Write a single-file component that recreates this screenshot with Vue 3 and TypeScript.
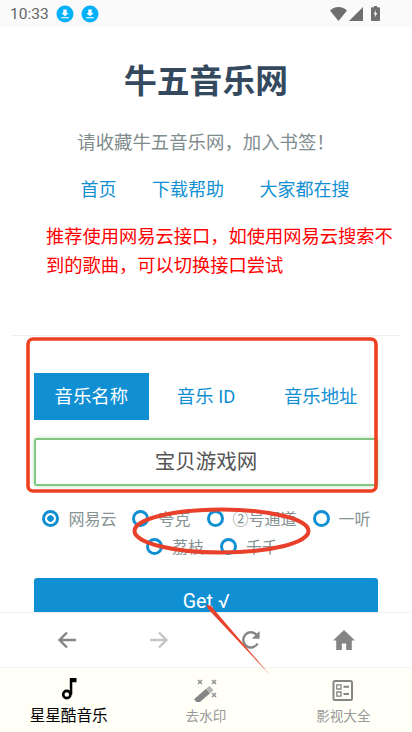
<template>
  <div class="phone">
    <header class="status-bar">
      <span class="clock">10:33</span>
      <svg v-for="n in 2" :key="n" class="dl-icon" viewBox="0 0 18 18">
        <circle cx="9" cy="9" r="8.5" fill="#03b1fb" />
        <path d="M7.3 4.6h3.4v3.3h2L9 11.3 5.3 7.9h2z" fill="#fff" />
        <rect x="5.2" y="12.2" width="7.6" height="1.1" fill="#fff" />
      </svg>
      <span class="status-right">
        <svg width="17" height="14" viewBox="0 0 17 14"><path d="M0 3.5C2.2 1.300 5.2 0 8.500 0s6.300 1.300 8.500 3.500L8.500 14z" fill="#6f6f6f" /></svg>
        <svg width="14" height="14" viewBox="0 0 14 14"><path d="M14 0v14H0z" fill="#6f6f6f" /></svg>
        <svg class="battery" width="9" height="15" viewBox="0 0 9 15">
          <path d="M3 0h3v1.2h2.2a.8.8 0 0 1 .8.8v12.2a.8.8 0 0 1-.8.8H.8a.8.8 0 0 1-.8-.8V2a.8.8 0 0 1 .8-.8H3z" fill="#6f6f6f" />
          <path d="M5 4 2.7 8.2h1.5L3.800 11.600 6.300 7H4.700z" fill="#fafafa" />
        </svg>
      </span>
    </header>

    <main class="page">
      <h1 class="title">牛五音乐网</h1>
      <p class="subtitle">请收藏牛五音乐网，加入书签！</p>
      <nav class="links">
        <a v-for="link in links" :key="link">{{ link }}</a>
      </nav>
      <p class="notice">推荐使用网易云接口，如使用网易云搜索不到的歌曲，可以切换接口尝试</p>
      <hr class="divider" />

      <div class="form">
        <ul class="tabs">
          <li v-for="(tab, i) in tabs" :key="tab" :class="{ active: i === 0 }">{{ tab }}</li>
        </ul>
        <div class="search-input">宝贝游戏网</div>
        <div class="sources">
          <div v-for="(row, r) in sourceRows" :key="r" class="source-row">
            <label v-for="source in row" :key="source" class="source">
              <span class="radio" :class="{ checked: source === '网易云' }"></span>{{ source }}
            </label>
          </div>
        </div>
        <button class="get-btn" type="button">Get √</button>
      </div>
    </main>

    <div class="browser-bar">
      <svg width="22" height="22" viewBox="0 0 22 22"><path d="M20 11H4M11 3.500 3.500 11l7.500 7.500" fill="none" stroke="#858585" stroke-width="2.400" /></svg>
      <svg width="22" height="22" viewBox="0 0 22 22"><path d="M2 11h16M11 3.500l7.500 7.500-7.500 7.500" fill="none" stroke="#c4c4c4" stroke-width="2.400" /></svg>
      <svg width="22" height="22" viewBox="0 0 22 22"><path d="M17.600 14.500A7.600 7.600 0 1 1 16.400 5.600" fill="none" stroke="#858585" stroke-width="2.400" /><path d="M19.600 2v7.800h-7.800z" fill="#858585" /></svg>
      <svg width="24" height="22" viewBox="0 0 24 22"><path d="M12 1 1 11.500h3.200V21h5.600v-6.500h4.400V21h5.600v-9.500H23z" fill="#858585" /></svg>
    </div>

    <footer class="tab-bar">
      <div class="tab-item on">
        <svg width="24" height="24" viewBox="0 0 24 24">
          <circle cx="9.800" cy="16.500" r="3.600" fill="none" stroke="#000" stroke-width="2.600" />
          <path d="M12.800 16.500V0h6.700v4.200h-4.200v12.300z" fill="#000" />
        </svg>
        <span>星星酷音乐</span>
      </div>
      <div class="tab-item">
        <svg width="24" height="24" viewBox="0 0 24 24">
          <path d="M2 23.500 14 13" stroke="#858585" stroke-width="6" fill="none" />
          <path d="M14 13l3.500-3" stroke="#b5b5b5" stroke-width="6" fill="none" />
          <path d="M4 2l4 4M8 2 4 6M18 2l4 4M22 2l-4 4M18 15l4 4M22 15l-4 4" stroke="#949494" stroke-width="1.600" fill="none" />
        </svg>
        <span>去水印</span>
      </div>
      <div class="tab-item">
        <svg width="24" height="24" viewBox="0 0 24 24">
          <rect x="2.500" y="3" width="18.500" height="19" rx="1.500" fill="none" stroke="#858585" stroke-width="2" />
          <path d="M5.800 6.800h4.200V11H5.800zM5.800 14h4.200v4.200H5.800z" fill="none" stroke="#858585" stroke-width="1.300" />
          <path d="M12.500 8.800H18M12.500 16H18" stroke="#858585" stroke-width="2" />
        </svg>
        <span>影视大全</span>
      </div>
    </footer>

    <!-- hand-drawn annotations over the screenshot -->
    <svg class="marks" width="412" height="732" viewBox="0 0 412 732">
      <rect x="28" y="339" width="348" height="152" rx="5" fill="none" stroke="#ee4122" stroke-width="3.600" />
      <ellipse cx="221.500" cy="531" rx="87" ry="21.500" fill="none" stroke="#e8402a" stroke-width="4" />
      <path d="M206.500 604.500 211 606 270 675 208 609z" fill="#e8402a" />
    </svg>
  </div>
</template>

<script setup lang="ts">
const links = ['首页', '下载帮助', '大家都在搜']
const tabs = ['音乐名称', '音乐 ID', '音乐地址']
const sourceRows = [
  ['网易云', '夸克', '②号通道', '一听'],
  ['荔枝', '千千']
]
</script>

<style>
html,
body {
  margin: 0;
  background: #fff;
}
</style>

<style scoped>
.phone {
  position: relative;
  display: flex;
  flex-direction: column;
  width: 412px;
  height: 732px;
  overflow: hidden;
  background: #fff;
  font-family: Roboto, "Noto Sans CJK SC", sans-serif;
}

.status-bar {
  display: flex;
  align-items: center;
  flex: none;
  height: 27px;
  padding-left: 10px;
  background: #fafafa;
  box-sizing: border-box;
}

.clock {
  margin-right: 7px;
  color: #666;
  font-size: 15.500px;
}

.dl-icon {
  width: 18px;
  height: 18px;
  margin-right: 7px;
}

.status-right {
  display: flex;
  align-items: center;
  gap: 2px;
  margin-left: auto;
  margin-right: 32px;
}

.battery {
  margin-left: 6px;
}

.page {
  flex: 1;
  min-height: 0;
  overflow: hidden;
}

.title {
  margin: 33px 0 0;
  color: #34495e;
  font-size: 32.800px;
  font-weight: 700;
  line-height: 44px;
  text-align: center;
}

.subtitle {
  margin: 26px 0 0;
  color: #7f8c8d;
  font-size: 18.400px;
  line-height: 26px;
  text-align: center;
}

.links {
  display: flex;
  justify-content: center;
  gap: 35.500px;
  margin-top: 21px;
  padding-left: 18px;
  color: #108fd3;
  font-size: 18px;
  line-height: 26px;
}

.notice {
  margin: 19px 15px 0 46px;
  color: #f00;
  font-size: 18.250px;
  line-height: 29px;
}

.divider {
  height: 1px;
  margin: 55px 12px 0 11px;
  border: 0;
  background: #eee;
}

.form {
  margin: 37px 34px 0;
}

.tabs {
  display: flex;
  margin: 0;
  padding: 0;
  list-style: none;
}

.tabs li {
  width: 115px;
  height: 47px;
  color: #108fd3;
  font-size: 18.400px;
  line-height: 47px;
  text-align: center;
}

.tabs li.active {
  background: #108fd3;
  color: #fff;
}

.search-input {
  height: 48px;
  margin-top: 18px;
  border: 2px solid #82c882;
  border-radius: 3px;
  box-sizing: border-box;
  box-shadow: 0 0 4px rgba(130, 200, 130, 0.5);
  color: #555;
  font-size: 20.500px;
  line-height: 44px;
  text-align: center;
}

.sources {
  margin-top: 18px;
  color: #869394;
  font-size: 16px;
}

.source-row {
  display: flex;
  justify-content: center;
  gap: 16px;
  height: 28px;
  padding-left: 1px;
}

.source-row + .source-row {
  padding-left: 12px;
}

.source {
  display: flex;
  align-items: center;
  gap: 9px;
}

.radio {
  flex: none;
  width: 17px;
  height: 17px;
  border: 3px solid #108fd3;
  border-radius: 50%;
  box-sizing: border-box;
}

.radio.checked {
  background: radial-gradient(circle, #108fd3 0 3px, #fff 3.500px);
}

.get-btn {
  display: block;
  width: 100%;
  height: 46px;
  margin-top: 18px;
  border: 0;
  border-radius: 3px;
  background: #108fd3;
  color: #fff;
  font-family: inherit;
  font-size: 19.600px;
}

.browser-bar {
  display: flex;
  align-items: center;
  justify-content: space-around;
  flex: none;
  height: 55px;
  padding: 0 21px;
  border-top: 1px solid #f2f2f2;
  background: #fff;
  box-sizing: border-box;
}

.tab-bar {
  display: grid;
  grid-template-columns: repeat(3, 1fr);
  flex: none;
  height: 65px;
  border-top: 1px solid #f4f4ee;
  background: #fffff8;
  box-sizing: border-box;
}

.tab-item {
  display: flex;
  flex-direction: column;
  align-items: center;
  gap: 4px;
  padding-top: 10px;
  color: #9a9a9a;
  font-size: 13.600px;
  line-height: 20px;
}

.tab-item svg {
  flex: none;
}

.tab-item.on {
  color: #000;
  font-size: 15.600px;
}

.marks {
  position: absolute;
  top: 0;
  left: 0;
  pointer-events: none;
}
</style>
